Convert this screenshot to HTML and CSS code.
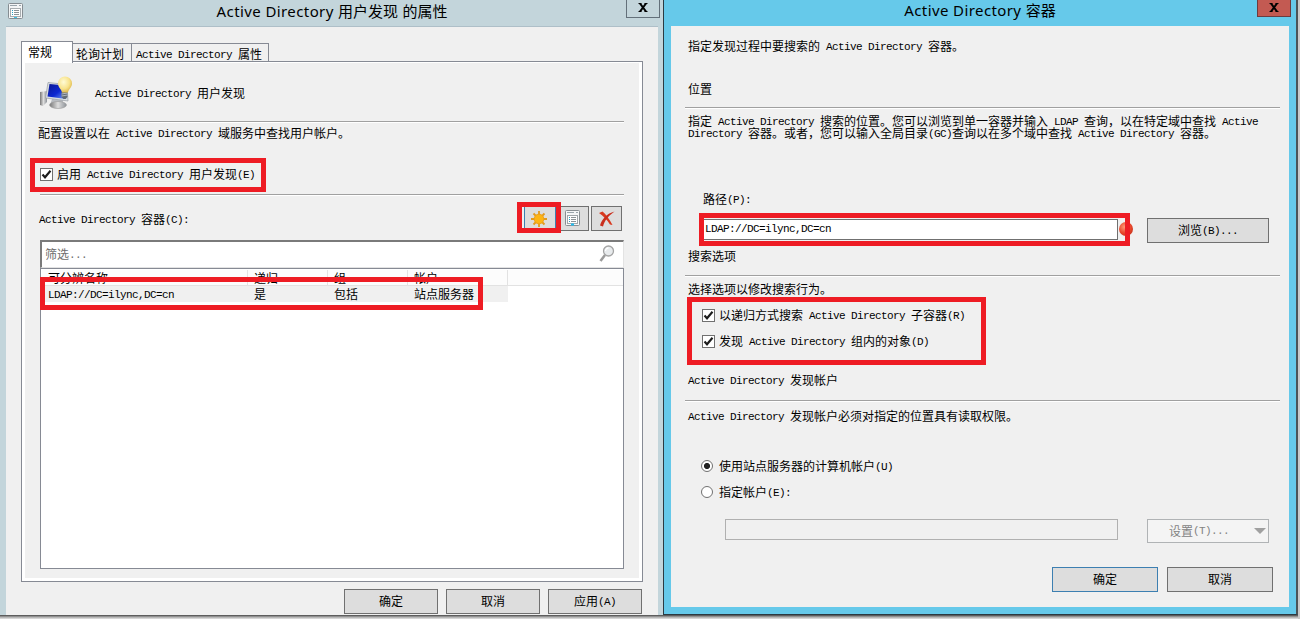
FILE: index.html
```html
<!DOCTYPE html>
<html lang="zh-CN">
<head>
    <meta charset="UTF-8">
    <title>Active Directory 用户发现 的属性</title>
    <link rel="stylesheet" href="styles.css">
</head>
<body>
    <div class="desktop">
        <div class="window props">
            <div class="titlebar">
                <svg class="app-icon" width="16" height="17" viewBox="0 0 16 17">
                    <rect x="0.5" y="0.5" width="14" height="15" rx="1" fill="#f3f5f6" stroke="#858d92"/>
                    <path d="M2 2.5h7M11 2.5h2" stroke="#9aa5ac"/>
                    <rect x="2.5" y="5.5" width="10" height="8" fill="#fff" stroke="#a8adb0"/>
                    <path d="M4 7.5h1M4 9.5h1M4 11.5h1" stroke="#2a9fc4"/>
                    <path d="M6 7.5h5M6 9.5h5M6 11.5h5" stroke="#8c9296"/>
                    <path d="M6 14.5h3" stroke="#35c3ea"/>
                </svg>
                <h1><span class="latin">Active Directory </span>用户发现<span class="latin"> </span>的属性</h1>
                <button class="close">
                    <svg width="10" height="9" viewBox="0 0 10 9"><path d="M0.5 0.5h3M6.5 0.5h3M0.5 8.5h3M6.5 8.5h3" stroke="#000"/><path d="M2 0.5L8 8.5M8 0.5L2 8.5" stroke="#000" stroke-width="2"/></svg>
                </button>
            </div>
            <div class="client">
                <div class="tabs">
                    <div class="tab active">常规</div>
                    <div class="tab tab-poll">轮询计划</div>
                    <div class="tab tab-attr"><span class="en">Active Directory </span>属性</div>
                </div>
                <div class="tab-panel">
                    <div class="panel-inner">
                        <div class="panel-head">
                            <svg width="34" height="34" viewBox="0 0 34 34">
                                <defs>
                                    <linearGradient id="screen" x1="0" y1="0" x2="1" y2="1"><stop offset="0" stop-color="#0a1690"/><stop offset="0.55" stop-color="#0d28d2"/><stop offset="1" stop-color="#7ba6f4"/></linearGradient>
                                    <linearGradient id="metal" x1="0" y1="0" x2="1" y2="0"><stop offset="0" stop-color="#777"/><stop offset="0.5" stop-color="#ddd"/><stop offset="1" stop-color="#8d9298"/></linearGradient>
                                    <radialGradient id="bulb" cx="0.4" cy="0.35" r="0.7"><stop offset="0" stop-color="#fffbd6"/><stop offset="0.6" stop-color="#f8e38c"/><stop offset="1" stop-color="#dbb244"/></radialGradient>
                                </defs>
                                <path d="M0 16l7-1v11l-4 4-3-1z" fill="url(#metal)"/>
                                <path d="M12 23l11 1v5H10z" fill="#b9bdc2"/>
                                <ellipse cx="18" cy="29" rx="8.5" ry="3.5" fill="url(#metal)" stroke="#999" stroke-width="0.6"/>
                                <path d="M8 6.5l19 2 1 16.500-22.500-3z" fill="#d9dde2" stroke="#979ca3" stroke-width="0.7"/>
                                <path d="M9.500 8l16 1.500 0.700 13.500L7.500 20.500z" fill="url(#screen)"/>
                                <path d="M21.500 16h6v5l-2 2h-2l-2-2z" fill="#626b76"/>
                                <path d="M21.500 18l6-1M21.500 20l6-1" stroke="#c5cad0" stroke-width="0.8"/>
                                <path d="M25 0.500a7 7 0 0 1 7 7c0 4-3.500 5.500-4 9h-6c-0.500-3.500-4-5-4-9a7 7 0 0 1 7-7z" fill="url(#bulb)"/>
                            </svg>
                            <div><span class="en">Active Directory </span>用户发现</div>
                        </div>
                        <div class="rule"></div>
                        <div class="line desc">配置设置以在<span class="en"> Active Directory </span>域服务中查找用户帐户。</div>
                        <div class="option enable">
                            <span class="checkbox"><svg width="11" height="11" viewBox="0 0 11 11"><path d="M1.500 5.500L4 8.300L9.500 1.800" fill="none" stroke="#1c1c1c" stroke-width="2.100"/></svg></span>
                            <span>启用<span class="en"> Active Directory </span>用户发现<span class="en">(E)</span></span>
                            <div class="mark mark-enable"></div>
                        </div>
                        <div class="rule"></div>
                        <div class="toolbar">
                            <div class="toolbar-label"><span class="en">Active Directory </span>容器<span class="en">(C):</span></div>
                            <button class="tool tool-new">
                                <svg width="18" height="18" viewBox="0 0 18 18">
                                    <path d="M9 1v16M1 9h16M3.500 3.500l11 11M14.500 3.500l-11 11" stroke="#e39a1c" stroke-width="1.800"/>
                                    <circle cx="9" cy="9" r="4.800" fill="#fdb515" stroke="#eda21b"/>
                                </svg>
                            </button>
                            <button class="tool tool-props">
                                <svg width="16" height="17" viewBox="0 0 16 17">
                                    <rect x="0.5" y="0.5" width="14" height="15" rx="1" fill="#f5f6f7" stroke="#888e92"/>
                                    <path d="M2 2.500h7M11 2.500h2" stroke="#9aa5ac"/>
                                    <rect x="2.500" y="5.500" width="10" height="8" fill="#fff" stroke="#a0a6aa"/>
                                    <path d="M4 7.500h1M4 9.500h1M4 11.500h1" stroke="#2a9fc4"/>
                                    <path d="M6 7.500h5M6 9.500h5M6 11.500h5" stroke="#8c9296"/>
                                    <path d="M6 14.500h3" stroke="#20bdf0" stroke-width="2"/>
                                </svg>
                            </button>
                            <button class="tool">
                                <svg width="18" height="16" viewBox="0 0 18 16">
                                    <path d="M1 2L4.500 0.500C7.500 3 11.500 8 14.500 14L12 13.500C9 8.500 5 5 1 2z" fill="#d8391f"/>
                                    <path d="M16.500 0.500C11.500 4 6.500 9 5 15.500L2 14.500C4 8 9 2.500 16.500 0.500z" fill="#c92e1c"/>
                                </svg>
                            </button>
                            <div class="mark mark-new"></div>
                        </div>
                        <div class="filter">
                            <span>筛选<span class="en">...</span></span>
                            <svg width="16" height="18" viewBox="0 0 16 18">
                                <path d="M6 10L1.500 16" stroke="#9b9b9b" stroke-width="2.500"/>
                                <circle cx="9.500" cy="6" r="5" fill="#e8ebed" stroke="#a4a4a4" stroke-width="1.300"/>
                                <path d="M6.500 6a3 3 0 0 1 3-3" fill="none" stroke="#fff" stroke-width="1.300"/>
                            </svg>
                        </div>
                        <div class="list">
                            <div class="list-row list-head">
                                <div>可分辨名称</div>
                                <div>递归</div>
                                <div>组</div>
                                <div>帐户</div>
                            </div>
                            <div class="list-row list-item">
                                <div><span class="en">LDAP://DC=ilync,DC=cn</span></div>
                                <div>是</div>
                                <div>包括</div>
                                <div>站点服务器</div>
                            </div>
                            <div class="mark mark-row"></div>
                        </div>
                    </div>
                </div>
                <div class="footer">
                    <button class="btn">确定</button>
                    <button class="btn">取消</button>
                    <button class="btn">应用<span class="en">(A)</span></button>
                </div>
            </div>
        </div>

        <div class="window container-dlg">
            <div class="titlebar">
                <h1><span class="latin">Active Directory </span>容器</h1>
                <button class="close">
                    <svg width="10" height="9" viewBox="0 0 10 9"><path d="M0.5 0.5h3M6.5 0.5h3M0.5 8.5h3M6.5 8.5h3" stroke="#000"/><path d="M2 0.5L8 8.5M8 0.5L2 8.5" stroke="#000" stroke-width="2"/></svg>
                </button>
            </div>
            <div class="client">
                <div class="line intro">指定发现过程中要搜索的<span class="en"> Active Directory </span>容器。</div>
                <div class="line location">位置</div>
                <div class="rule"></div>
                <div class="para">
                    <div>指定<span class="en"> Active Directory </span>搜索的位置。您可以浏览到单一容器并输入<span class="en"> LDAP </span>查询，以在特定域中查找<span class="en"> Active</span></div>
                    <div><span class="en">Directory </span>容器。或者，您可以输入全局目录<span class="en">(GC)</span>查询以在多个域中查找<span class="en"> Active Directory </span>容器。</div>
                </div>
                <div class="line path-label">路径<span class="en">(P):</span></div>
                <div class="path-row">
                    <div class="input"><span class="en">LDAP://DC=ilync,DC=cn</span></div>
                    <span class="error-dot"></span>
                    <button class="btn">浏览<span class="en">(B)...</span></button>
                    <div class="mark mark-path"></div>
                </div>
                <div class="line search-title">搜索选项</div>
                <div class="rule"></div>
                <div class="line search-desc">选择选项以修改搜索行为。</div>
                <div class="search-options">
                    <div class="option">
                        <span class="checkbox"><svg width="11" height="11" viewBox="0 0 11 11"><path d="M1.500 5.500L4 8.300L9.500 1.800" fill="none" stroke="#1c1c1c" stroke-width="2.100"/></svg></span>
                        <span>以递归方式搜索<span class="en"> Active Directory </span>子容器<span class="en">(R)</span></span>
                    </div>
                    <div class="option">
                        <span class="checkbox"><svg width="11" height="11" viewBox="0 0 11 11"><path d="M1.500 5.500L4 8.300L9.500 1.800" fill="none" stroke="#1c1c1c" stroke-width="2.100"/></svg></span>
                        <span>发现<span class="en"> Active Directory </span>组内的对象<span class="en">(D)</span></span>
                    </div>
                    <div class="mark mark-options"></div>
                </div>
                <div class="line account-title"><span class="en">Active Directory </span>发现帐户</div>
                <div class="rule"></div>
                <div class="line account-desc"><span class="en">Active Directory </span>发现帐户必须对指定的位置具有读取权限。</div>
                <div class="account-options">
                    <div class="option">
                        <span class="radio checked"></span>
                        <span>使用站点服务器的计算机帐户<span class="en">(U)</span></span>
                    </div>
                    <div class="option">
                        <span class="radio"></span>
                        <span>指定帐户<span class="en">(E):</span></span>
                    </div>
                </div>
                <div class="account-row">
                    <div class="input disabled"></div>
                    <button class="btn disabled">设置<span class="en">(T)...</span><i class="arrow"></i></button>
                </div>
                <div class="footer">
                    <button class="btn default">确定</button>
                    <button class="btn">取消</button>
                </div>
            </div>
        </div>
    </div>
</body>
</html>
```
FILE: styles.css
```css
* {
    box-sizing: border-box;
}
body {
    margin: 0;
    background-color: #fff;
    color: #000;
    font-family: "Noto Sans CJK SC", sans-serif;
    font-size: 12px;
    line-height: 14px;
    overflow: hidden;
}
button {
    font: inherit;
    color: inherit;
    padding: 0;
    margin: 0;
}
svg {
    display: block;
    flex: none;
}
/* half-width text: 6px per character next to 12px hanzi */
.en {
    font-family: "Liberation Mono", monospace;
    font-size: 11px;
    letter-spacing: -0.6px;
    line-height: 0;
    vertical-align: 1px;
    white-space: pre;
}
.desktop {
    display: flex;
    align-items: flex-start;
    width: 1300px;
    height: 619px;
    background: linear-gradient(to bottom, #444 615px, #777 616px, #aaa 617px, #e4e4e4 619px);
    border-right: 2px solid #c8c8c8;
}

/* windows */
.window {
    flex: none;
    display: flex;
    flex-direction: column;
}
.props {
    width: 663px;
    height: 615px;
    padding: 0 5px 0 6px;
    background-color: #c3d5db;
}
.container-dlg {
    width: 635px;
    height: 615px;
    padding: 0 7px 0 7px;
    background-color: #66c9ea;
    border-left: 1px solid #2b3a42;
    border-right: 2px solid #4b5357;
    border-bottom: 1px solid #2b3a42;
}
.titlebar {
    position: relative;
    height: 26px;
    flex: none;
    display: flex;
    justify-content: center;
}
.titlebar h1 {
    margin: 0;
    font-size: 15px;
    font-weight: normal;
    line-height: 21px;
}
.container-dlg h1 {
    line-height: 20px;
}
.latin {
    font-family: "Noto Sans", sans-serif;
    letter-spacing: 0.4px;
    line-height: 0;
    white-space: pre;
}
.app-icon {
    position: absolute;
    left: 2px;
    top: 3px;
}
.close {
    position: absolute;
    top: -1px;
    right: -2px;
    width: 34px;
    height: 19px;
    display: flex;
    align-items: center;
    justify-content: center;
    padding-bottom: 2px;
    background-color: #c3d5db;
    border: 1px solid #63707a;
}
.container-dlg .close {
    height: 18px;
    background-color: #c35a52;
    border-color: #6d3b3f;
}
.client {
    background-color: #f0f0f0;
}
.props .client {
    height: 589px;
    padding: 14px 15px 0 15px;
    border-top: 1px solid #aebfc8;
}
.container-dlg .client {
    display: flow-root;
    height: 581px;
    padding: 0 9px 0 14px;
}

/* tabs */
.tabs {
    display: flex;
    align-items: flex-end;
    height: 20px;
}
.tab {
    height: 18px;
    line-height: 19px;
    border: 1px solid #868a94;
    border-bottom: 0;
    border-left: 0;
    padding-left: 4px;
    white-space: nowrap;
}
.tab.active {
    position: relative;
    width: 52px;
    height: 22px;
    margin-bottom: -2px;
    line-height: 19px;
    padding-left: 6px;
    border-left: 1px solid #868a94;
    background-color: #fff;
}
.tab-poll {
    width: 59px;
    padding-left: 3px;
}
.tab-attr {
    width: 137px;
}
.tab-panel {
    width: 622px;
    height: 521px;
    border: 1px solid #868a94;
    background-color: #fff;
    padding: 1px 3px 3px 3px;
}
.panel-inner {
    height: 515px;
    background-color: #f0f0f0;
    padding: 14px 15px 0 15px;
}
.panel-head {
    display: flex;
    align-items: center;
    gap: 21px;
    height: 32px;
}
.rule {
    height: 2px;
    background-color: #a0a0a0;
    border-bottom: 1px solid #fff;
}
.line {
    height: 14px;
    white-space: nowrap;
}
.panel-head + .rule {
    margin-top: 12px;
}
.desc {
    margin: 3px 0 0 -2px;
}

/* check boxes and radio buttons */
.option {
    position: relative;
    display: flex;
    align-items: center;
    gap: 4px;
    height: 14px;
    white-space: nowrap;
}
.checkbox {
    flex: none;
    width: 13px;
    height: 13px;
    border: 1px solid #707070;
    background-color: #fff;
}
.radio {
    flex: none;
    width: 12px;
    height: 12px;
    border: 1px solid #707070;
    border-radius: 50%;
    background-color: #fff;
}
.radio.checked {
    background-image: radial-gradient(circle, #222 0 2.7px, transparent 3.4px);
}
.enable {
    margin: 27px 0 13px;
}

/* red highlight frames */
.mark {
    position: absolute;
    border: 5px solid #ee1c24;
}
.mark-enable {
    left: -10px;
    top: -9px;
    width: 236px;
    height: 34px;
}
.mark-new {
    left: 477px;
    top: -4px;
    width: 44px;
    height: 31px;
}
.mark-row {
    left: -1px;
    top: 8px;
    width: 443px;
    height: 33px;
}
.mark-path {
    left: -4px;
    top: -5px;
    width: 431px;
    height: 33px;
}
.mark-options {
    left: -15px;
    top: -11px;
    width: 299px;
    height: 68px;
}

/* container list */
.toolbar {
    position: relative;
    display: flex;
    align-items: center;
    height: 25px;
    margin: 10px 2px 9px 0;
}
.toolbar-label {
    margin: 0 auto 0 -1px;
}
.tool {
    width: 31px;
    height: 25px;
    display: flex;
    align-items: center;
    justify-content: center;
    background-color: #ddd;
    border: 1px solid #707070;
    margin-left: 2px;
}
.tool-new {
    width: 32px;
    padding-right: 2px;
    border-color: #3c7fb1;
}
.tool-props {
    padding-right: 2px;
}
.filter {
    display: flex;
    align-items: center;
    justify-content: space-between;
    height: 28px;
    padding: 0 8px 2px 3px;
    color: #6d6d6d;
    background-color: #fff;
    border: 1px solid #e3e3e3;
    border-top: 2px solid #7a7a7a;
    border-left: 2px solid #7a7a7a;
}
.list {
    position: relative;
    height: 301px;
    border: 1px solid #868a94;
    background-color: #fff;
    padding: 1px 0 0 1px;
}
.list-row {
    display: grid;
    grid-template-columns: 206px 80px 80px 100px;
    height: 16px;
    line-height: 16px;
    white-space: nowrap;
}
.list-row > div {
    padding-left: 6px;
}
.list-head {
    border-bottom: 1px solid #e2e2e2;
    background-color: #fcfcfc;
}
.list-head > div {
    height: 15px;
    border-right: 1px solid #e2e2e2;
}
.list-item {
    width: 466px;
    background-color: #f0f0f0;
}

/* buttons and inputs */
.footer {
    display: flex;
    justify-content: flex-end;
    gap: 8px;
}
.btn {
    height: 25px;
    width: 94px;
    padding-bottom: 1px;
    background-color: #ddd;
    border: 1px solid #707070;
}
.footer .btn {
    padding-bottom: 2px;
}
.props .footer {
    margin: 7px 1px 0 0;
}
.input {
    width: 415px;
    height: 21px;
    padding-left: 1px;
    line-height: 16px;
    background-color: #fff;
    border: 1px solid #707070;
}

/* container dialog */
.intro {
    margin: 13px 0 0 3px;
}
.location {
    margin: 29px 0 11px 3px;
}
.para {
    margin: 6px 0 0 3px;
    line-height: 12px;
    white-space: nowrap;
}
.para div {
    height: 12px;
}
.path-label {
    margin: 53px 0 12px 18px;
}
.path-row {
    position: relative;
    display: flex;
    align-items: flex-start;
    height: 25px;
    margin-left: 18px;
}
.path-row .input {
    margin-top: 1px;
}
.path-row .btn {
    width: 122px;
    margin-left: 14px;
}
.error-dot {
    width: 14px;
    height: 14px;
    margin: 4px 0 0 1px;
    border-radius: 50%;
    background: radial-gradient(circle at 40% 35%, #ff9a78, #e8472c 50%, #b32612);
}
.search-title {
    margin: 6px 0 12px 3px;
}
.search-desc {
    margin: 5px 0 12px 3px;
}
.search-options {
    position: relative;
    display: flex;
    flex-direction: column;
    gap: 12px;
    margin-left: 17px;
}
.account-title {
    margin: 25px 0 13px 3px;
}
.account-desc {
    margin: 7px 0 36px 3px;
}
.account-options {
    display: flex;
    flex-direction: column;
    gap: 12px;
    margin-left: 16px;
}
.account-options .option {
    gap: 6px;
}
.account-row {
    display: flex;
    align-items: flex-start;
    justify-content: space-between;
    margin: 20px 11px 0 40px;
}
.input.disabled {
    width: 393px;
    background-color: #f0f0f0;
    border-color: #b0b0b0;
}
.btn.disabled {
    display: flex;
    align-items: center;
    width: 122px;
    height: 24px;
    padding-left: 21px;
    color: #838383;
    background-color: #f4f4f4;
    border-color: #b0b3b5;
}
.arrow {
    margin: 0 2px 0 auto;
    border: 6px solid transparent;
    border-top: 6px solid #a0a0a0;
    border-bottom: 0;
}
.container-dlg .footer {
    gap: 9px;
    margin: 24px 7px 0 0;
}
.container-dlg .footer .btn {
    width: 106px;
}
.container-dlg .footer .default {
    border-color: #3c7fb1;
}
```
